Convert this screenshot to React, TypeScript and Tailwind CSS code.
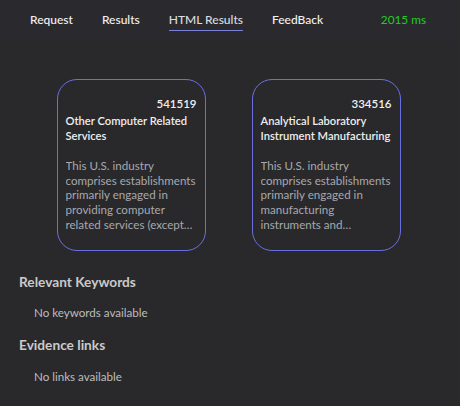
import React from "react";

interface Industry {
  code: string;
  title: string;
  description: string;
}

const industries: Industry[] = [
  {
    code: "541519",
    title: "Other Computer Related Services",
    description:
      "This U.S. industry comprises establishments primarily engaged in providing computer related services (except custom programming, systems integration design, and facilities management services).",
  },
  {
    code: "334516",
    title: "Analytical Laboratory Instrument Manufacturing",
    description:
      "This U.S. industry comprises establishments primarily engaged in manufacturing instruments and instrumentation systems for laboratory analysis.",
  },
];

const tabs = ["Request", "Results", "HTML Results", "FeedBack"];

function IndustryCard({ item }: { item: Industry }) {
  return (
    <div className="w-[149px] h-[172px] shrink-0 rounded-[20px] border border-[#6a6fe0] px-[8px] pt-[16px] overflow-hidden">
      <div className="text-right text-[11.5px] leading-[15px] font-semibold text-[#f0f0f0]">{item.code}</div>
      <p className="mt-[3px] text-[11.2px] leading-[14.5px] font-semibold text-[#eeeeee]">{item.title}</p>
      <p className="mt-[16px] max-h-[74px] text-[11.6px] leading-[14.7px] text-[#a8a8ac] line-clamp-5">{item.description}</p>
    </div>
  );
}

export default function App() {
  return (
    <div className="min-h-[406px] w-full bg-[#29292c] font-['Lato','Noto_Sans',sans-serif]">
      <nav className="h-[40px] flex items-center pl-[30px] pr-[34px] text-[12px] bg-[#2a2a2e]">
        <div className="flex items-center gap-[29px]">
          {tabs.map((t) => (
            <span
              key={t}
              className={
                t === "HTML Results"
                  ? "text-[#dcdce0] font-medium border-b border-[#7a7fd8] pt-[1px] pb-[1px]"
                  : "text-[#f2f2f2] font-medium"
              }
            >
              {t}
            </span>
          ))}
        </div>
        <span className="ml-auto text-[#22cc22] text-[11.8px]">2015 ms</span>
      </nav>

      <div className="pt-[39px] pr-[3px] flex justify-center gap-[46px]">
        {industries.map((i) => (
          <IndustryCard key={i.code} item={i} />
        ))}
      </div>

      <section className="px-[19px] pt-[22px]">
        <h2 className="text-[13.7px] leading-[18px] font-bold text-[#cacaca]">Relevant Keywords</h2>
        <p className="mt-[14px] pl-[15px] text-[11.6px] leading-[15px] text-[#bdbdbd]">No keywords available</p>
        <h2 className="mt-[16px] text-[13.7px] leading-[18px] font-bold text-[#cacaca]">Evidence links</h2>
        <p className="mt-[15px] pl-[15px] text-[11.6px] leading-[15px] text-[#bdbdbd]">No links available</p>
      </section>
    </div>
  );
}
